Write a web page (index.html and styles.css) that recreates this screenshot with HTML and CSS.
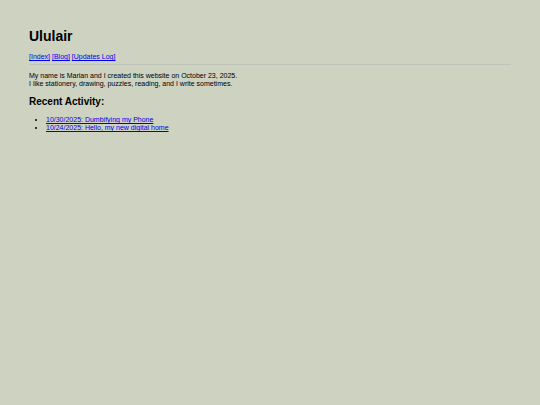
FILE: index.html
```html
<!DOCTYPE html>
<html lang="en">
<head>
<meta charset="utf-8">
<title>Ululair</title>
<link rel="stylesheet" href="styles.css">
</head>
<body>
<header>
<h1>Ululair</h1>
<nav><a href="#index">[Index]</a> <a href="#blog">[Blog]</a> <a href="#updates">[Updates Log]</a></nav>
</header>
<main>
<p>My name is Marian and I created this website on October 23, 2025.<br>I like stationery, drawing, puzzles, reading, and I write sometimes.</p>
<h2>Recent Activity:</h2>
<ul>
<li><a href="#phone">10/30/2025: Dumbifying my Phone</a></li>
<li><a href="#hello">10/24/2025: Hello, my new digital home</a></li>
</ul>
</main>
</body>
</html>
```
FILE: styles.css
```css
body {
  margin: 0;
  padding: 28px 29px;
  background: #ced2c0;
  color: #000;
  font-family: "Liberation Sans", Arial, sans-serif;
  font-size: 7px;
  line-height: 8px;
}

header {
  padding-bottom: 3px;
  border-bottom: 1px solid #c0c3b8;
}

h1 {
  margin: 0 0 9px;
  font-size: 14px;
  line-height: 16px;
}

h2 {
  margin: 0 0 8px;
  font-size: 10px;
  line-height: 12px;
}

p {
  margin: 7px 0 8px;
}

a {
  color: #0000ee;
}

ul {
  margin: 0;
  padding-left: 17px;
}
```
